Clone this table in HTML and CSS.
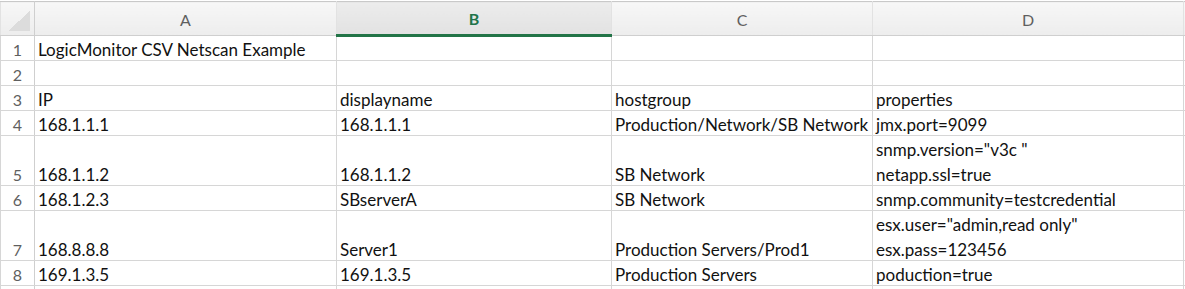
FILE: index.html
```html
<!DOCTYPE html>
<html lang="en">
<head>
    <meta charset="UTF-8">
    <title>LogicMonitor CSV Netscan Example</title>
    <link rel="stylesheet" href="styles.css">
</head>
<body>
<table class="sheet">
    <colgroup>
        <col class="col-num">
        <col class="col-a">
        <col class="col-b">
        <col class="col-c">
        <col class="col-d">
        <col class="col-rest">
    </colgroup>
    <thead>
        <tr>
            <th class="corner"><span class="corner-mark"></span></th>
            <th>A</th>
            <th class="selected">B</th>
            <th>C</th>
            <th>D</th>
            <th class="rest"></th>
        </tr>
    </thead>
    <tbody>
        <tr>
            <td class="num">1</td>
            <td>LogicMonitor CSV Netscan Example</td>
            <td></td><td></td><td></td><td class="rest"></td>
        </tr>
        <tr>
            <td class="num">2</td>
            <td></td><td></td><td></td><td></td><td class="rest"></td>
        </tr>
        <tr>
            <td class="num">3</td>
            <td>IP</td>
            <td>displayname</td>
            <td>hostgroup</td>
            <td>properties</td>
            <td class="rest"></td>
        </tr>
        <tr>
            <td class="num">4</td>
            <td>168.1.1.1</td>
            <td>168.1.1.1</td>
            <td>Production/Network/SB Network</td>
            <td>jmx.port=9099</td>
            <td class="rest"></td>
        </tr>
        <tr class="tall">
            <td class="num">5</td>
            <td>168.1.1.2</td>
            <td>168.1.1.2</td>
            <td>SB Network</td>
            <td><div class="line">snmp.version="v3c "</div><div class="line">netapp.ssl=true</div></td>
            <td class="rest"></td>
        </tr>
        <tr>
            <td class="num">6</td>
            <td>168.1.2.3</td>
            <td>SBserverA</td>
            <td>SB Network</td>
            <td>snmp.community=testcredential</td>
            <td class="rest"></td>
        </tr>
        <tr class="tall">
            <td class="num">7</td>
            <td>168.8.8.8</td>
            <td>Server1</td>
            <td>Production Servers/Prod1</td>
            <td><div class="line">esx.user="admin,read only"</div><div class="line">esx.pass=123456</div></td>
            <td class="rest"></td>
        </tr>
        <tr>
            <td class="num">8</td>
            <td>169.1.3.5</td>
            <td>169.1.3.5</td>
            <td>Production Servers</td>
            <td>poduction=true</td>
            <td class="rest"></td>
        </tr>
        <tr>
            <td class="num"></td>
            <td></td><td></td><td></td><td></td><td class="rest"></td>
        </tr>
    </tbody>
</table>
</body>
</html>
```

FILE: styles.css
```css
* {
    margin: 0;
    padding: 0;
    box-sizing: border-box;
}

body {
    background: #fff;
    font-family: Lato, "Open Sans", sans-serif;
    font-size: 17px;
    color: #111;
    overflow: hidden;
}

.sheet {
    border-collapse: collapse;
    table-layout: fixed;
    width: 1185px;
    margin-top: 1px;
}

.col-num { width: 34px; }
.col-a { width: 302px; }
.col-b { width: 275px; }
.col-c { width: 261px; }
.col-d { width: 311px; }
.col-rest { width: 2px; }

/* column headers */
thead th {
    height: 34px;
    font-size: 16px;
    line-height: 20px;
    font-weight: 400;
    color: #5f5f5f;
    background: linear-gradient(#f7f7f7, #ededed);
    border-top: 1px solid #c9c9c9;
    border-bottom: 1px solid #cfcfcf;
    border-left: 1px solid #e2e2e2;
    border-right: 1px solid #e2e2e2;
    vertical-align: middle;
    padding-top: 2px;
}

thead th.selected {
    color: #21744a;
    font-weight: 700;
    background: linear-gradient(#ececec, #e2e2e2);
    border-bottom: 3px solid #227447;
}

thead th.corner {
    border-right: 1px solid #cfcfcf;
    text-align: left;
    padding: 0;
}

.corner-mark {
    display: block;
    width: 22px;
    height: 20px;
    margin: 5px 0 0 7px;
    background: linear-gradient(to bottom right, transparent 50%, #dcdcdc 50%);
}

/* cells */
td {
    height: 25px;
    line-height: 20px;
    padding: 0 0 0 3px;
    border: 1px solid #d6d6d6;
    vertical-align: bottom;
    white-space: nowrap;
    overflow: visible;
}

tr.tall td {
    height: 50px;
}

.line + .line {
    margin-top: 5px;
}

td.num {
    padding: 0;
    text-align: center;
    font-size: 16px;
    color: #5f5f5f;
    border-right-color: #cfcfcf;
}

td.rest,
th.rest {
    border-right: none;
    padding: 0;
}
```
